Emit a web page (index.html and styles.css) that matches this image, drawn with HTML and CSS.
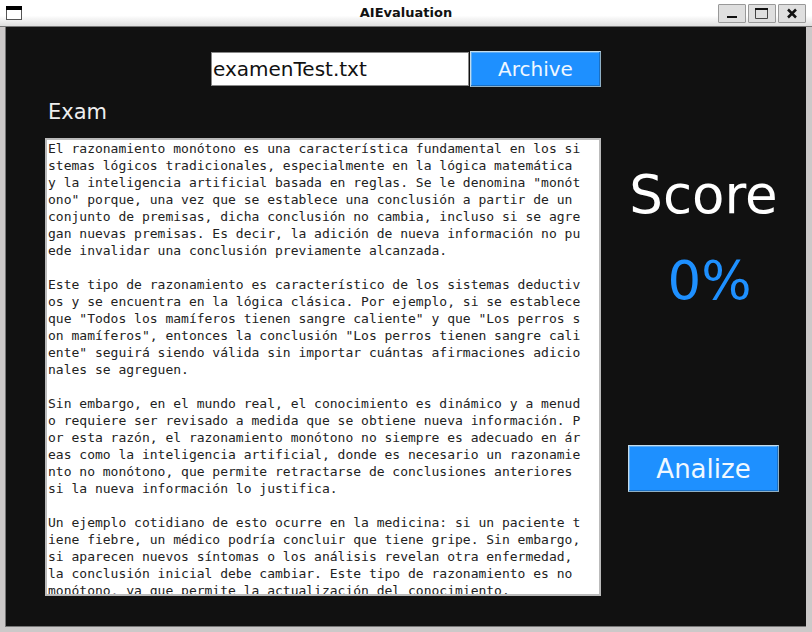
FILE: index.html
```html
<!DOCTYPE html>
<html lang="es">
<head>
<meta charset="utf-8">
<title>AIEvaluation</title>
<link rel="stylesheet" href="styles.css">
</head>
<body>
<div class="window">
  <header class="titlebar">
    <svg class="app-icon" width="16" height="14" viewBox="0 0 16 14" aria-hidden="true"><rect x=".5" y=".5" width="15" height="13" fill="#fff" stroke="#555"/><rect width="16" height="4" fill="#000"/></svg>
    <h1 class="title">AIEvaluation</h1>
    <div class="controls">
      <button class="control" type="button" aria-label="Minimize"><svg width="26" height="17" viewBox="0 0 26 17"><path d="M8 12h10" stroke="#111" stroke-width="2"/></svg></button>
      <button class="control" type="button" aria-label="Maximize"><svg width="26" height="17" viewBox="0 0 26 17"><path d="M6.500 4v9.500h12V4" fill="none" stroke="#444"/><path d="M6 4h13" stroke="#111" stroke-width="2"/></svg></button>
      <button class="control" type="button" aria-label="Close"><svg width="26" height="17" viewBox="0 0 26 17"><path d="M9 4.500l8 8M17 4.500l-8 8" stroke="#111" stroke-width="2.500"/></svg></button>
    </div>
  </header>
  <main class="content">
    <section class="exam">
      <div class="file-row">
        <input class="file-name" type="text" value="examenTest.txt" aria-label="File" spellcheck="false">
        <button class="button archive" type="button">Archive</button>
      </div>
      <label class="exam-label" for="exam-text">Exam</label>
      <textarea class="exam-text" id="exam-text" spellcheck="false">El razonamiento monótono es una característica fundamental en los si
stemas lógicos tradicionales, especialmente en la lógica matemática
y la inteligencia artificial basada en reglas. Se le denomina "monót
ono" porque, una vez que se establece una conclusión a partir de un
conjunto de premisas, dicha conclusión no cambia, incluso si se agre
gan nuevas premisas. Es decir, la adición de nueva información no pu
ede invalidar una conclusión previamente alcanzada.

Este tipo de razonamiento es característico de los sistemas deductiv
os y se encuentra en la lógica clásica. Por ejemplo, si se establece
que "Todos los mamíferos tienen sangre caliente" y que "Los perros s
on mamíferos", entonces la conclusión "Los perros tienen sangre cali
ente" seguirá siendo válida sin importar cuántas afirmaciones adicio
nales se agreguen.

Sin embargo, en el mundo real, el conocimiento es dinámico y a menud
o requiere ser revisado a medida que se obtiene nueva información. P
or esta razón, el razonamiento monótono no siempre es adecuado en ár
eas como la inteligencia artificial, donde es necesario un razonamie
nto no monótono, que permite retractarse de conclusiones anteriores
si la nueva información lo justifica.

Un ejemplo cotidiano de esto ocurre en la medicina: si un paciente t
iene fiebre, un médico podría concluir que tiene gripe. Sin embargo,
si aparecen nuevos síntomas o los análisis revelan otra enfermedad,
la conclusión inicial debe cambiar. Este tipo de razonamiento es no
monótono, ya que permite la actualización del conocimiento.</textarea>
    </section>
    <aside class="result">
      <h2 class="score-title">Score</h2>
      <output class="score">0%</output>
      <button class="button analize" type="button">Analize</button>
    </aside>
  </main>
</div>
</body>
</html>
```
FILE: styles.css
```css
* { box-sizing: border-box; }

body {
  margin: 0;
  background: #ccc9c9;
  font-family: "DejaVu Sans", sans-serif;
}

.window {
  display: flex;
  flex-direction: column;
  min-height: 100vh;
}

.titlebar {
  display: grid;
  grid-template-columns: 1fr auto 1fr;
  align-items: center;
  height: 27px;
  padding: 0 6px;
  background: linear-gradient(#fff 60%, #dedede);
  border-bottom: 1px solid #777;
}

.title {
  margin: 0;
  font: bold 13px/18px "DejaVu Sans", sans-serif;
  color: #111;
}

.controls {
  display: flex;
  justify-content: flex-end;
  gap: 2px;
}

.control {
  display: flex;
  padding: 0;
  border: 1px solid #999;
  border-radius: 1px;
  background: #dfdfdf;
}

.content {
  flex: 1;
  display: grid;
  grid-template-columns: 1fr 151px;
  column-gap: 27px;
  margin: 0 6px 5px 5px;
  padding: 24px 27px 30px 39px;
  background: #111;
  border-left: 1px solid #777;
  border-bottom: 1px solid #777;
}

.exam {
  display: flex;
  flex-direction: column;
  min-width: 0;
}

.file-row {
  display: flex;
  justify-content: flex-end;
  align-items: center;
  gap: 1px;
}

.file-name {
  width: 258px;
  height: 34px;
  padding: 0 1px;
  border: 1px solid #888;
  background: #fff;
  color: #111;
  font: 20px "DejaVu Sans", sans-serif;
}

.button {
  padding: 0;
  border: 1px solid;
  border-color: #c4dcec #8fb0c6 #8fb0c6 #c4dcec;
  box-shadow: inset -1px -1px #1a70c4, inset 1px 1px #5cacf6;
  background: #1e90ff;
  color: #f0f8ff;
  font-family: "DejaVu Sans", sans-serif;
}

.archive {
  width: 131px;
  height: 36px;
  font-size: 20px;
}

.exam-label {
  padding: 12px 3px;
  color: #eee;
  font-size: 21px;
  line-height: 27px;
}

.exam-text {
  flex: 1;
  width: 100%;
  min-height: 200px;
  padding: 0 1px;
  border: 2px solid #bbb;
  background: #fff;
  color: #222;
  font: 13px/17px "DejaVu Sans Mono", monospace;
  white-space: pre;
  overflow: hidden;
  resize: none;
}

.result {
  display: flex;
  flex-direction: column;
  align-items: center;
  padding-top: 113px;
}

.score-title {
  margin: 0;
  color: #fff;
  font-size: 53px;
  font-weight: normal;
  line-height: 62px;
}

.score {
  margin-top: 24px;
  padding-left: 12px;
  color: #1e90ff;
  font-size: 53px;
  line-height: 62px;
}

.analize {
  width: 100%;
  height: 47px;
  margin-top: 133px;
  font-size: 26px;
}
```
